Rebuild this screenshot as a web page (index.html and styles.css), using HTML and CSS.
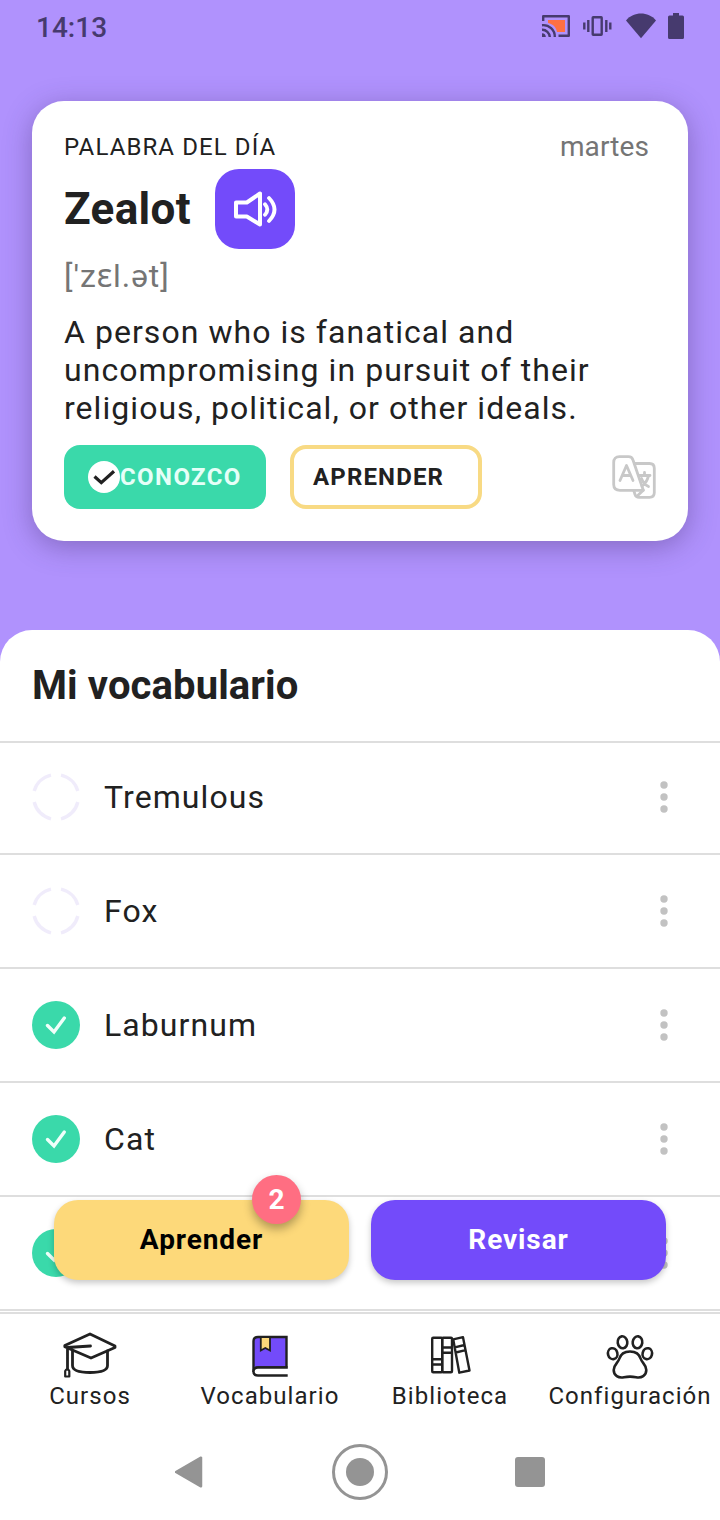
FILE: index.html
```html
<!DOCTYPE html>
<html lang="es">
<head>
<meta charset="utf-8">
<title>Vocabulario</title>
<link rel="stylesheet" href="styles.css">
</head>
<body>
<div class="screen">
  <header class="status-bar">
    <span class="clock">14:13</span>
    <svg class="status-icons" width="146" height="32" viewBox="0 0 146 32">
      <path d="M8 10H25V22H17C16 17 13 14 8 13Z" fill="#ff7043"/>
      <g fill="none" stroke="#463a6e" stroke-width="2.400" stroke-linejoin="round">
        <path d="M3.200 11V6.200H28.800V25.800H18.500"/>
        <path d="M2 15.200A11.500 11.500 0 0 1 14.800 27M2 19.800A7.500 7.500 0 0 1 9.800 27"/>
        <rect x="52.700" y="7.300" width="9" height="17.400" rx="0.500"/>
        <path d="M48.300 10v12M44.300 12.500v7M66.300 10v12M70.300 12.500v7"/>
      </g>
      <path d="M2 23.200A3.800 3.800 0 0 1 5.800 27H2Z" fill="#463a6e"/>
      <path d="M101 28.200L86 10.400C94 1.300 108 1.300 116 10.400Z" fill="#463a6e"/>
      <path d="M133 3h6v2.500h3.500q1.500 0 1.500 1.500v20.500q0 1.500-1.500 1.500h-13q-1.500 0-1.500-1.500V7q0-1.500 1.500-1.500h3.500z" fill="#463a6e"/>
    </svg>
  </header>

  <section class="word-card">
    <div class="card-top">
      <span class="card-label">PALABRA DEL DÍA</span>
      <span class="card-day">martes</span>
    </div>
    <div class="word-row">
      <h1 class="word">Zealot</h1>
      <button class="speak" aria-label="Escuchar">
        <svg width="48" height="48" viewBox="0 0 48 48" fill="none" stroke="#fff" stroke-width="4" stroke-linecap="round">
          <path stroke-linejoin="round" d="M5 17.500H15.800L29 8.500V39.500L15.800 31.500H5Z"/>
          <path d="M34 19.200Q38.600 24.500 34 29.800M38 13Q49 24.500 38 36" stroke-width="3.800"/>
        </svg>
      </button>
    </div>
    <div class="phonetic">['zɛl.ət]</div>
    <p class="definition">A person who is fanatical and uncompromising in pursuit of their religious, political, or other ideals.</p>
    <div class="card-actions">
      <button class="btn-known">
        <svg width="32" height="32" viewBox="0 0 32 32"><circle cx="16" cy="16" r="16" fill="#fff"/><path d="M6.500 15.500L13.300 21.700L26 10.200" fill="none" stroke="#212121" stroke-width="3.200"/></svg><span>CONOZCO</span>
      </button>
      <button class="btn-learn">APRENDER</button>
      <svg class="translate" width="44" height="44" viewBox="0 0 44 44" fill="none" stroke="#c8c8c8" stroke-width="2.800" stroke-linejoin="round" stroke-linecap="round">
        <path d="M7.500 1.700H16.500Q20 1.700 21 5L31.300 35.300H8Q1.700 35.300 1.700 29.500V7.500Q1.700 1.700 7.500 1.700Z"/>
        <path d="M22.800 8.500H37.500Q42.300 8.500 42.300 13.300V37.500Q42.300 42.300 37.500 42.300H27Q24 42.300 23 39.500L21.800 35.500M31.300 35.300L24.700 41.500"/>
        <path d="M8 25.500L14.500 10.500L21 25.500M10.500 20.500H18.500"/>
        <path d="M27 20.500H38M32.500 17.500V20.500M36.500 21Q34.500 28 30 31M29.500 23.500Q31.500 29 36.500 31.500"/>
      </svg>
    </div>
  </section>

  <main class="sheet">
    <h2 class="sheet-title">Mi vocabulario</h2>
    <ul class="words">
      <li class="item"><svg class="state" viewBox="0 0 48 48"><use href="#pending"/></svg><span class="name">Tremulous</span><svg class="more" viewBox="0 0 8 32"><use href="#dots"/></svg></li>
      <li class="item"><svg class="state" viewBox="0 0 48 48"><use href="#pending"/></svg><span class="name">Fox</span><svg class="more" viewBox="0 0 8 32"><use href="#dots"/></svg></li>
      <li class="item"><svg class="state" viewBox="0 0 48 48"><use href="#done"/></svg><span class="name">Laburnum</span><svg class="more" viewBox="0 0 8 32"><use href="#dots"/></svg></li>
      <li class="item"><svg class="state" viewBox="0 0 48 48"><use href="#done"/></svg><span class="name">Cat</span><svg class="more" viewBox="0 0 8 32"><use href="#dots"/></svg></li>
      <li class="item"><svg class="state" viewBox="0 0 48 48"><use href="#done"/></svg><span class="name"></span><svg class="more" viewBox="0 0 8 32"><use href="#dots"/></svg></li>
    </ul>
    <div class="floating">
      <button class="fab fab-learn">Aprender<span class="badge">2</span></button>
      <button class="fab fab-review">Revisar</button>
    </div>
  </main>

  <nav class="tabs">
    <a class="tab">
      <svg width="54" height="48" viewBox="0 0 54 48" fill="none" stroke="#212121" stroke-width="2.800" stroke-linejoin="round" stroke-linecap="round">
        <path d="M27 3L52 15V16.500L28 27L1.800 15.800V14.600ZM27.500 15L4.500 16.500V38"/>
        <path d="M9.500 20V34.500Q9.500 41.500 27 41.500T44.500 34.500V20"/>
        <path d="M2.200 45.500V40L3.200 38.500H5.300L6.300 40V45.500Z" stroke-width="2.200"/>
      </svg>
      <span>Cursos</span>
    </a>
    <a class="tab">
      <svg width="54" height="48" viewBox="0 0 54 48" fill="none" stroke="#212121" stroke-width="2.400">
        <path d="M10.500 41V10Q10.500 6 15 6H43.500V36.500H15Q11.500 36.500 10.500 40" fill="#734bfa"/>
        <path d="M17.800 6V19.500L22.300 17L27 19.500V6Z" fill="#fdd97a" stroke-width="1.800"/>
        <path d="M44.700 36.500H15Q10.500 36.500 10.500 40.500T15 44.500H44.700" fill="#fff"/>
      </svg>
      <span>Vocabulario</span>
    </a>
    <a class="tab">
      <svg width="54" height="48" viewBox="0 0 54 48" fill="none" stroke="#212121" stroke-width="2.400" stroke-linejoin="round">
        <rect x="9.200" y="6.700" width="10" height="34.600" rx="1"/><rect x="19.200" y="6.700" width="9.800" height="34.600" rx="1"/>
        <path d="M9 28.300H19M9 33.500H19M19 16.500H29M19 21.800H29M30.200 8.300L40 6.200L46.500 39.500L36.300 41.700ZM31.800 16.300L41.500 14M32.800 21.500L42.600 19.200"/>
      </svg>
      <span>Biblioteca</span>
    </a>
    <a class="tab">
      <svg width="54" height="48" viewBox="0 0 54 48" fill="none" stroke="#212121" stroke-width="2.600">
        <ellipse cx="19.500" cy="11.300" rx="4.800" ry="6" transform="rotate(-8 19.500 11.300)"/><ellipse cx="34.500" cy="11.300" rx="4.800" ry="6" transform="rotate(8 34.500 11.300)"/>
        <ellipse cx="9.700" cy="22.700" rx="4.700" ry="5.500" transform="rotate(-14 9.700 22.700)"/><ellipse cx="44.300" cy="22.700" rx="4.700" ry="5.500" transform="rotate(14 44.300 22.700)"/>
        <path d="M27 20.500C33.500 20.500 36.500 23.500 37.800 28C39 32 43.300 33.500 43.300 39C43.300 44.500 38.500 47.500 33 46.200Q27 45 21 46.200C15.500 47.500 10.700 44.500 10.700 39C10.700 33.500 15 32 16.200 28C17.500 23.500 20.500 20.500 27 20.500Z"/>
      </svg>
      <span>Configuración</span>
    </a>
  </nav>

  <footer class="system-nav">
    <svg width="30" height="34" viewBox="0 0 30 34"><path d="M1 17L26 2.700V31.300Z" fill="#949494" stroke="#949494" stroke-width="2.500" stroke-linejoin="round"/></svg>
    <svg width="56" height="56" viewBox="0 0 56 56"><circle cx="28" cy="28" r="26.500" fill="none" stroke="#949494" stroke-width="3"/><circle cx="28" cy="28" r="14" fill="#949494"/></svg>
    <svg width="30" height="30" viewBox="0 0 30 30"><rect width="30" height="30" rx="3" fill="#949494"/></svg>
  </footer>
</div>

<svg class="symbols" width="0" height="0">
  <symbol id="pending" viewBox="0 0 48 48"><path d="M2.200 18A22.500 22.500 0 0 1 19 2.200M29 2.200A22.500 22.500 0 0 1 45.800 18M45.800 29A22.500 22.500 0 0 1 29 45.800M19 45.800A22.500 22.500 0 0 1 2.200 29" fill="none" stroke="#f0ecfb" stroke-width="3.400"/></symbol>
  <symbol id="done" viewBox="0 0 48 48"><circle cx="24" cy="24" r="24" fill="#3ad9aa"/><path d="M15.500 24.500L22 31L32.300 17" fill="none" stroke="#f0fffa" stroke-width="3.400" stroke-linecap="round"/></symbol>
  <symbol id="dots" viewBox="0 0 8 32"><g fill="#c2c2c2"><circle cx="4" cy="4" r="3.700"/><circle cx="4" cy="16" r="3.700"/><circle cx="4" cy="28" r="3.700"/></g></symbol>
</svg>
</body>
</html>
```
FILE: styles.css
```css
* { box-sizing: border-box; }
body { margin: 0; font-family: Roboto, "Noto Sans", sans-serif; color: #212121; background: #fff; }
button { font: inherit; border: 0; padding: 0; margin: 0; }
svg { display: block; flex: none; }
.symbols { position: absolute; }
.screen { width: 720px; height: 1520px; display: flex; flex-direction: column; overflow: hidden; background: #b092fd; }

.status-bar { height: 101px; padding: 10px 34px 0 36px; display: flex; justify-content: space-between; align-items: flex-start; flex: none; }
.clock { margin-top: 1px; font-size: 28px; line-height: 34px; font-weight: 500; letter-spacing: 0; color: #463a6e; }

.word-card { flex: none; margin: 0 32px; height: 440px; padding: 32px; border-radius: 32px; background: #fff; box-shadow: 0 6px 28px rgba(60, 40, 100, 0.38); }
.card-top { display: flex; justify-content: space-between; height: 28px; line-height: 28px; padding-right: 7px; }
.card-label { font-size: 24px; letter-spacing: 1.1px; }
.card-day { font-size: 28px; letter-spacing: 0.1px; color: #757575; }
.word-row { display: flex; align-items: center; gap: 24px; height: 80px; margin-top: 8px; }
.word { margin: 0; font-size: 44px; font-weight: 700; letter-spacing: 0.35px; }
.speak { width: 80px; height: 80px; border-radius: 24px; background: #734bfa; display: flex; align-items: center; justify-content: center; }
.phonetic { margin-top: 8px; font-size: 32px; line-height: 38px; letter-spacing: 0.9px; color: #757575; }
.definition { margin: 18px 0 0; font-size: 32px; line-height: 38px; letter-spacing: 1.05px; width: 560px; }
.card-actions { display: flex; align-items: center; margin-top: 18px; height: 64px; font-size: 24px; font-weight: 700; letter-spacing: 1.4px; }
.btn-known, .btn-learn { height: 64px; border-radius: 16px; letter-spacing: inherit; }
.btn-known { width: 202px; padding-left: 24px; background: #3ad9aa; color: #e6fff8; display: flex; align-items: center; }
.btn-learn { width: 192px; margin-left: 24px; padding-left: 19px; border: 4px solid #f8da84; background: #fff; color: #212121; text-align: left; letter-spacing: 1.15px; }
.translate { margin-left: auto; }

.sheet { position: relative; flex: none; height: 682px; margin-top: 89px; border-radius: 32px 32px 0 0; background: #fff; overflow: hidden; }
.sheet-title { margin: 0; height: 113px; padding-left: 32px; font-size: 40px; line-height: 111px; font-weight: 700; letter-spacing: 0.1px; border-bottom: 2px solid #dedede; }
.words { list-style: none; margin: 0; padding: 0; }
.item { height: 114px; padding: 0 52px 0 32px; display: flex; align-items: center; border-bottom: 2px solid #dedede; }
.item:first-child { height: 112px; padding-bottom: 2px; }
.state { width: 48px; height: 48px; }
.name { flex: 1; margin-left: 24px; font-size: 32px; letter-spacing: 1.08px; }
.more { width: 8px; height: 32px; }

.floating { position: absolute; left: 54px; right: 54px; bottom: 32px; display: flex; gap: 22px; }
.fab { position: relative; flex: 1; height: 80px; padding-bottom: 2px; border-radius: 24px; font-size: 28px; font-weight: 700; letter-spacing: 0.9px; box-shadow: 0 3px 6px rgba(0, 0, 0, 0.22); }
.fab-learn { background: #fdd97a; color: #000; }
.fab-review { background: #734bfa; color: #fff; }
.badge { position: absolute; right: 48px; top: -25px; width: 49px; height: 49px; border-radius: 50%; background: #ff6e82; color: #fff; line-height: 49px; letter-spacing: 0; box-shadow: 0 5px 10px rgba(0, 0, 0, 0.3); }

.tabs { flex: none; height: 112px; display: flex; border-top: 2px solid #dedede; background: #fff; }
.tab { width: 180px; padding-top: 17px; display: flex; flex-direction: column; gap: 1px; align-items: center; font-size: 24px; line-height: 32px; letter-spacing: 1.05px; white-space: nowrap; }

.system-nav { flex: 1; display: grid; grid-template-columns: 30px 56px 30px; justify-content: center; column-gap: 127px; align-items: center; background: #fff; }
```
